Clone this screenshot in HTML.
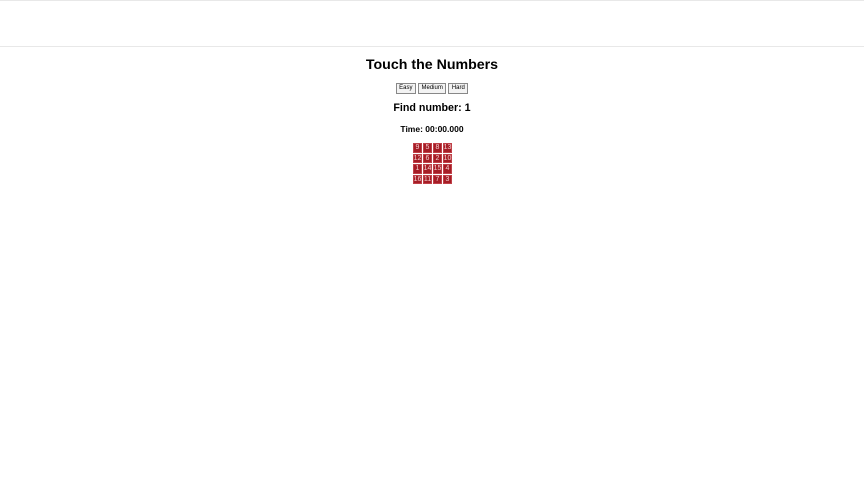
<!DOCTYPE html>
<html><head><style>
body{margin:0;width:864px;height:486px;background:#fff;font-family:"Liberation Sans",sans-serif;position:relative;overflow:hidden}
.top{position:absolute;left:0;top:0;width:864px;height:47px;border-top:1px solid #e8e8e8;border-bottom:1px solid #e8e8e8;box-sizing:border-box}
.c{position:absolute;left:0;width:864px;text-align:center;font-weight:bold;color:#000}
.btns{position:absolute;top:83px;left:0;width:864px;text-align:center;font-size:0}
.btns span{display:inline-block;font-size:6px;border:1px solid #888;background:#f3f3f3;padding:1px 2.5px;margin:0 1px;height:7px;line-height:7px;font-weight:normal}
.grid{position:absolute;left:413px;top:143px;display:grid;grid-template-columns:repeat(4,9px);grid-template-rows:repeat(4,9.5px);grid-gap:1px}
.grid div{background:#a51d26;color:#f4d0d0;font-size:7px;line-height:9.5px;text-align:center;box-shadow:inset 0 0 0 1px #c04048}
</style></head><body>
<div class="top"></div>
<div class="c" style="top:57px;font-size:14.2px">Touch the Numbers</div>
<div class="btns"><span>Easy</span><span>Medium</span><span>Hard</span></div>
<div class="c" style="top:102px;font-size:10.7px">Find number: 1</div>
<div class="c" style="top:124px;font-size:8.5px">Time: 00:00.000</div>
<div class="grid">
<div>9</div><div>5</div><div>8</div><div>13</div>
<div>12</div><div>6</div><div>2</div><div>10</div>
<div>1</div><div>14</div><div>15</div><div>4</div>
<div>16</div><div>11</div><div>7</div><div>3</div>
</div>
</body></html>
